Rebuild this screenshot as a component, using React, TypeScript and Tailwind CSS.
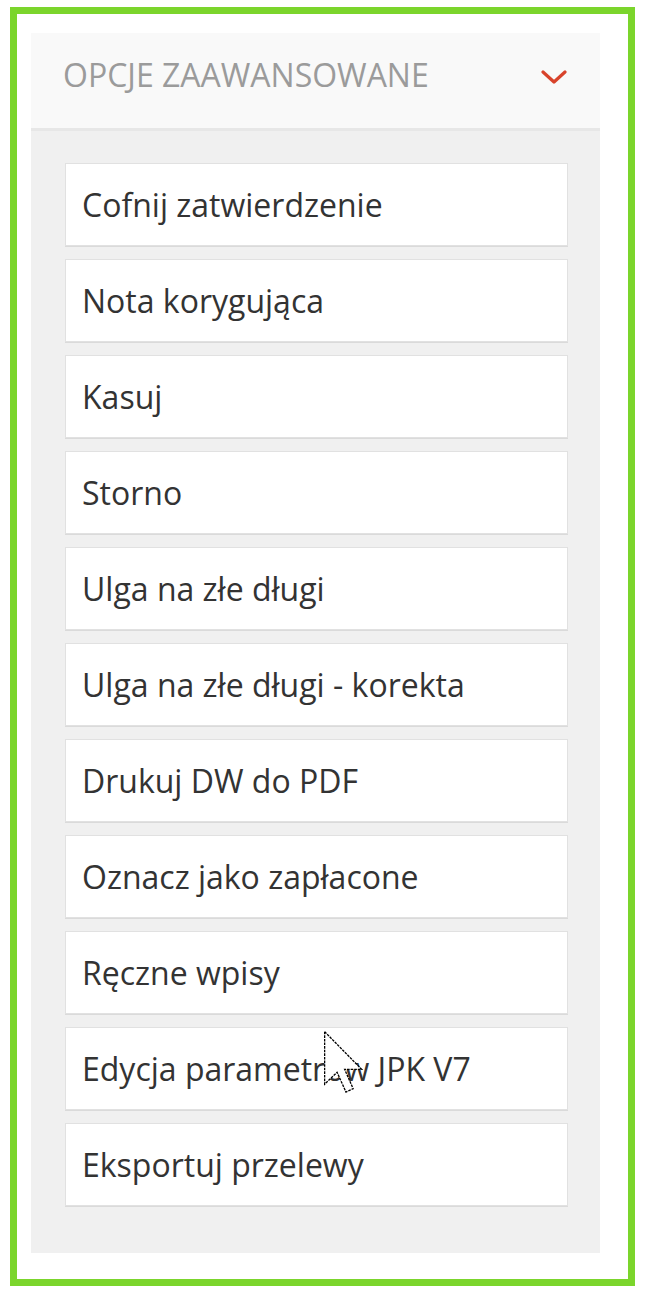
import React from "react";

const items = [
  "Cofnij zatwierdzenie",
  "Nota korygująca",
  "Kasuj",
  "Storno",
  "Ulga na złe długi",
  "Ulga na złe długi - korekta",
  "Drukuj DW do PDF",
  "Oznacz jako zapłacone",
  "Ręczne wpisy",
  "Edycja parametrów JPK V7",
  "Eksportuj przelewy",
];

export default function App() {
  return (
    <div
      className="w-[645px] h-[1296px] bg-white pt-[7px] pl-[10px]"
      style={{ fontFamily: '"Open Sans", "Noto Sans", sans-serif' }}
    >
      <div className="relative w-[625px] h-[1279px] border-[7px] border-[#7bd52c] pt-[19px] pl-[14px]">
        <div className="w-[569px]">
          <div className="h-[98px] bg-[#f9f9f9] border-b-[3px] border-[#e7e7e7] flex items-start justify-between pl-[32px] pr-[33px]">
            <span className="mt-[26px] text-[32px] text-[#9b9b9b] leading-none">
              OPCJE ZAAWANSOWANE
            </span>
            <svg width="26" height="15" viewBox="0 0 26 15" className="mt-[37px]">
              <path d="M2 2 L13 12 L24 2" fill="none" stroke="#d8432b" strokeWidth="3.2" strokeLinecap="round" strokeLinejoin="round" />
            </svg>
          </div>
          <div className="bg-[#f0f0f0] pl-[34px] pr-[32px] pt-[32px] pb-[47px] flex flex-col gap-[13px]">
            {items.map((t) => (
              <div
                key={t}
                className="h-[83px] bg-white border border-[#e1e1e1] shadow-[0_1px_0_#dadada] flex items-center pl-[16px] text-[32px] text-[#333333]"
              >
                {t}
              </div>
            ))}
          </div>
        </div>
        <svg
          className="absolute left-[306px] top-[1016px]"
          width="41"
          height="64"
          viewBox="0 0 12.5 19.5"
        >
          <path
            d="M0.5 0.5 L0.5 16.5 L4.3 12.9 L7 18.9 L9.2 17.9 L6.6 12 L11.8 12 Z"
            fill="white"
            stroke="black"
            strokeWidth="0.4"
            strokeDasharray="0.8 0.3"
          />
        </svg>
      </div>
    </div>
  );
}
